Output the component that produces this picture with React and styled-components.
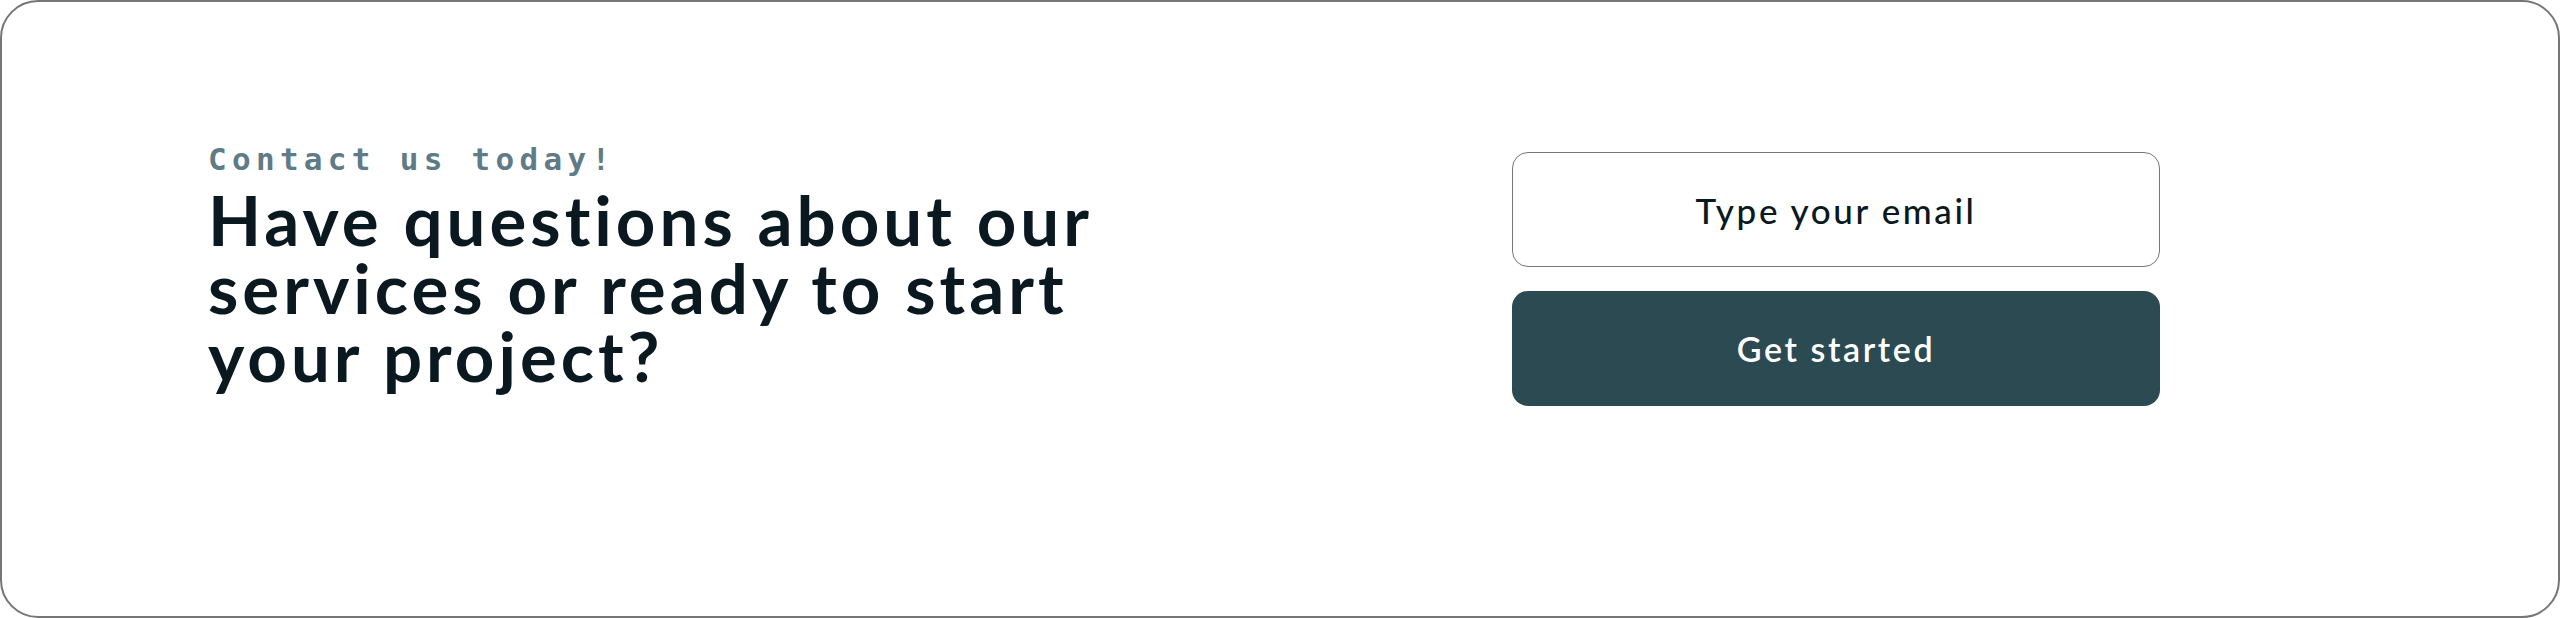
import React from 'react'
import styled, { createGlobalStyle } from 'styled-components'

const GlobalStyle = createGlobalStyle`
  html, body {
    margin: 0;
    padding: 0;
    background: #ffffff;
  }
  * {
    box-sizing: border-box;
  }
`

function App() {
  return (
    <>
      <GlobalStyle />
      <Card>
        <Intro>
          <Eyebrow>Contact us today!</Eyebrow>
          <Heading>
            Have questions about our
            <br />
            services or ready to start
            <br />
            your project?
          </Heading>
        </Intro>
        <Form>
          <EmailInput type="email" placeholder="Type your email" />
          <SubmitButton type="button">Get started</SubmitButton>
        </Form>
      </Card>
    </>
  )
}

const Card = styled.section`
  width: 2560px;
  height: 618px;
  border: 2px solid #767676;
  border-radius: 38px;
  background: #ffffff;
  display: flex;
  justify-content: space-between;
  align-items: flex-start;
  padding: 140px 398px 0 206px;
`

const Intro = styled.div`
  display: flex;
  flex-direction: column;
`

const Eyebrow = styled.div`
  font-family: "DejaVu Sans Mono", "Liberation Mono", monospace;
  font-weight: bold;
  font-size: 31px;
  line-height: 34px;
  letter-spacing: 5.3px;
  color: #5f7b87;
`

const Heading = styled.h2`
  margin: 10px 0 0;
  font-family: Lato, "Noto Sans", sans-serif;
  font-weight: 700;
  font-size: 69px;
  line-height: 68px;
  letter-spacing: 4px;
  color: #0a1820;
`

const Form = styled.form`
  width: 648px;
  display: flex;
  flex-direction: column;
  gap: 24px;
  margin-top: 10px;
`

const EmailInput = styled.input`
  height: 115px;
  border: 1.5px solid #767676;
  border-radius: 16px;
  background: #ffffff;
  text-align: center;
  font-family: Lato, "Noto Sans", sans-serif;
  font-weight: 500;
  font-size: 35px;
  letter-spacing: 2.6px;
  color: #0a1820;
  outline: none;

  &::placeholder {
    color: #0a1820;
    opacity: 1;
  }
`

const SubmitButton = styled.button`
  height: 115px;
  border: none;
  border-radius: 16px;
  background: #2c4a52;
  color: #ffffff;
  font-family: Lato, "Noto Sans", sans-serif;
  font-weight: 600;
  font-size: 34px;
  letter-spacing: 2.6px;
  cursor: pointer;
`

export default App
